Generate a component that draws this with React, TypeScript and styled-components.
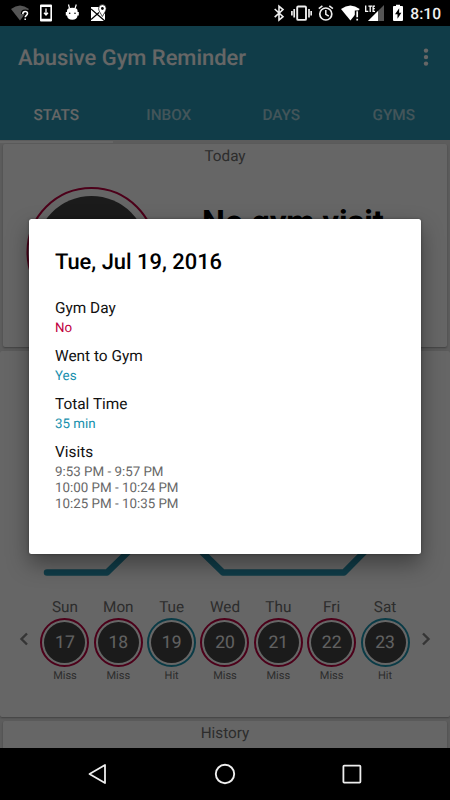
import React from "react";
import styled, { createGlobalStyle } from "styled-components";

const teal = "#2a97b3";
const ringTeal = "#1b93b0";
const crimson = "#bd0040";

const GlobalStyle = createGlobalStyle`
  * { box-sizing: border-box; }
  body {
    margin: 0;
    background: #000;
    font-family: Roboto, sans-serif;
    text-rendering: geometricPrecision;
  }
`;

const Screen = styled.div`
  position: relative;
  width: 450px;
  height: 800px;
  display: flex;
  flex-direction: column;
  overflow: hidden;
  background: #000;
`;

const StatusBar = styled.div`
  flex: none;
  height: 26px;
  display: flex;
  align-items: center;
  padding: 0 9px 0 10px;
`;

const StatusIcon = styled.svg<{ $gap?: number }>`
  flex: none;
  display: block;
  margin-left: ${(p) => p.$gap ?? 0}px;
`;

const Clock = styled.span`
  margin-left: auto;
  font-size: 15.6px;
  line-height: 26px;
  font-weight: 500;
  color: #f0f0f0;
  padding-top: 2px;
`;

const AppArea = styled.main`
  flex: none;
  height: 722px;
  overflow: hidden;
  background: #e6e6e6;
`;

const AppHeader = styled.header`
  height: 114px;
  background: ${teal};
  color: #fff;
`;

const TitleRow = styled.div`
  height: 63px;
  display: flex;
  align-items: center;
  justify-content: space-between;
  padding: 0 21px 0 18px;
`;

const AppTitle = styled.h1`
  margin: 2px 0 0;
  font-size: 21.9px;
  line-height: 28px;
  font-weight: 500;
`;

const Tabs = styled.nav`
  height: 51px;
  display: grid;
  grid-template-columns: repeat(4, 1fr);
`;

const Tab = styled.div<{ $active?: boolean }>`
  display: flex;
  justify-content: center;
  border-bottom: 2px solid ${(p) => (p.$active ? "#fff" : "transparent")};
  color: ${(p) => (p.$active ? "#fff" : "rgba(255,255,255,.6)")};
  font-size: 15.3px;
  line-height: 52px;
  font-weight: 500;
`;

const Cards = styled.div`
  display: flex;
  flex-direction: column;
  padding-top: 4px;
  gap: 4px;
`;

const Card = styled.section<{ $height: number; $inset: number }>`
  height: ${(p) => p.$height}px;
  margin: 0 ${(p) => p.$inset}px;
  display: flex;
  flex-direction: column;
  background: #fff;
  border-radius: 2px;
  box-shadow: 0 1px 2px rgba(0, 0, 0, 0.3);
`;

const CardTitle = styled.h2`
  margin: 0;
  text-align: center;
  font-size: 15.3px;
  line-height: 24px;
  font-weight: 400;
  color: #707070;
`;

const TodayBody = styled.div`
  display: flex;
  padding: 19px 0 0 23px;
`;

const TodayText = styled.strong`
  margin: 16px 0 0 46px;
  font-size: 32.5px;
  line-height: 38px;
  font-weight: 700;
  color: #000;
`;

const Chart = styled.svg`
  display: block;
  flex: none;
  margin-top: 180px;
`;

const Week = styled.div`
  display: flex;
  justify-content: center;
  align-items: flex-start;
  margin-top: 6px;
`;

const Days = styled.div`
  width: 373.4px;
  display: grid;
  grid-template-columns: repeat(7, 1fr);
`;

const DayColumn = styled.div`
  display: flex;
  flex-direction: column;
  align-items: center;
`;

const DayName = styled.span`
  font-size: 15.3px;
  line-height: 20px;
  color: #707070;
`;

const DayRing = styled.div<{ $hit: boolean }>`
  width: 49px;
  height: 49px;
  margin-top: 1px;
  border-radius: 50%;
  border: 2px solid ${(p) => (p.$hit ? ringTeal : crimson)};
  padding: 2px;
`;

const DayDisc = styled.div`
  height: 100%;
  border-radius: 50%;
  background: #444;
  color: #f2f2f2;
  font-size: 17.5px;
  line-height: 42px;
  text-align: center;
`;

const DayResult = styled.span`
  margin-top: 2px;
  font-size: 11px;
  line-height: 14px;
  color: #707070;
`;

const Arrow = styled.svg`
  flex: none;
  display: block;
  margin: 35px 9px 0;
`;

const Scrim = styled.div`
  position: absolute;
  inset: 26px 0 52px;
  background: rgba(0, 0, 0, 0.6);
  overflow: hidden;
`;

const Dialog = styled.div`
  position: absolute;
  left: 28.5px;
  top: 193px;
  width: 392px;
  height: 335px;
  padding: 30px 26.5px;
  background: #fff;
  border-radius: 2.5px;
  box-shadow: 0 10px 22px rgba(0, 0, 0, 0.38), 0 0 3px rgba(0, 0, 0, 0.35);
`;

const DialogTitle = styled.h2`
  margin: 0 0 21px;
  padding-top: 1px;
  font-size: 21.9px;
  line-height: 26px;
  font-weight: 500;
  color: #000;
`;

const Field = styled.div`
  margin-bottom: 8px;
`;

const FieldLabel = styled.div`
  font-size: 15.4px;
  line-height: 22px;
  padding-bottom: 2px;
  color: #111;
`;

const FieldValue = styled.div<{ $color?: string }>`
  font-size: 13.35px;
  line-height: 16px;
  color: ${(p) => p.$color ?? "#686868"};
`;

const NavBar = styled.footer`
  flex: none;
  height: 52px;
  display: flex;
  align-items: center;
  justify-content: center;
  gap: 103px;
`;

const week = [
  { name: "Sun", date: 17, hit: false },
  { name: "Mon", date: 18, hit: false },
  { name: "Tue", date: 19, hit: true },
  { name: "Wed", date: 20, hit: false },
  { name: "Thu", date: 21, hit: false },
  { name: "Fri", date: 22, hit: false },
  { name: "Sat", date: 23, hit: true },
];

const details = [
  { label: "Gym Day", values: ["No"], color: "#c0003f" },
  { label: "Went to Gym", values: ["Yes"], color: "#168fad" },
  { label: "Total Time", values: ["35 min"], color: "#168fad" },
  {
    label: "Visits",
    values: ["9:53 PM - 9:57 PM", "10:00 PM - 10:24 PM", "10:25 PM - 10:35 PM"],
  },
];

const Status = () => (
  <StatusBar>
    <StatusIcon width="20" height="26" viewBox="10 0 20 26">
      <path d="M11 9Q20 2 29 9L20 20.5Z" fill="#555" />
      <path d="M22.8 14Q22.8 11.6 25.2 11.6Q27.5 11.6 27.5 13.6C27.5 15.3 25.2 15.4 25.2 17.3M25.2 18.4V20" stroke="#000" strokeWidth="4" fill="none" />
      <path d="M22.8 14Q22.8 11.6 25.2 11.6Q27.5 11.6 27.5 13.6C27.5 15.3 25.2 15.4 25.2 17.3M25.2 18.4V20" stroke="#fff" strokeWidth="1.5" fill="none" />
    </StatusIcon>
    <StatusIcon $gap={10} width="12" height="26" viewBox="40 0 12 26">
      <path fillRule="evenodd" fill="#fff" d="M41 4.5H51Q52 4.5 52 5.5V20.5Q52 21.5 51 21.5H41Q40 21.5 40 20.5V5.5Q40 4.5 41 4.5ZM41.6 7V18.8H50.4V7Z" />
      <path d="M46 8.5V14M44 12.8L46 15L48 12.8" stroke="#fff" strokeWidth="1.3" fill="none" />
    </StatusIcon>
    <StatusIcon $gap={13} width="15" height="26" viewBox="65 0 15 26">
      <path d="M67 11Q67 7.8 72.3 7.8Q77.6 7.8 77.6 11V12H78.8V15.5H77.6Q77 19.8 72.3 19.8Q67.6 19.8 67 15.5H65.8V12H67Z" fill="#fff" />
      <path d="M69.5 8.5L68.5 4.5M75 8.5L76.3 4.5" stroke="#fff" strokeWidth="1.2" />
      <circle cx="69.7" cy="13.3" r=".8" />
      <circle cx="75" cy="13.3" r=".8" />
    </StatusIcon>
    <StatusIcon $gap={11} width="16" height="26" viewBox="91 0 16 26">
      <path d="M91 7H99L105 14V21H91Z" fill="#fff" />
      <path d="M91 9L105.5 21.5M91 19.5L99 12.5" stroke="#000" strokeWidth="1.3" />
      <path d="M102.4 16.5C100.5 13 98.6 11 98.6 8.4A3.8 3.8 0 0 1 106.2 8.4C106.2 11 104.3 13 102.4 16.5Z" fill="#fff" stroke="#000" strokeWidth=".7" />
      <circle cx="102.4" cy="8.5" r="1.4" />
    </StatusIcon>
    <StatusIcon $gap={167} width="11" height="26" viewBox="274 0 11 26">
      <path d="M274.7 9L283 16.7L279 20V6.3L283 9.6L274.7 17.2" stroke="#eee" strokeWidth="1.6" fill="none" />
    </StatusIcon>
    <StatusIcon $gap={6} width="21" height="26" viewBox="291 0 21 26">
      <rect x="297.2" y="6.5" width="8.8" height="13.4" rx="1" fill="none" stroke="#eee" strokeWidth="1.9" />
      <path d="M291.9 11V15.5M294.2 9V17.5M309 9V17.5M311.2 11V15.5" stroke="#eee" strokeWidth="1.7" />
    </StatusIcon>
    <StatusIcon $gap={6} width="16" height="26" viewBox="318 0 16 26">
      <circle cx="325.8" cy="14" r="6" fill="none" stroke="#eee" strokeWidth="1.7" />
      <path d="M325.8 10V14.3L328.8 16.2M318.8 8.7L322.4 5.8M332.9 8.7L329.3 5.8" stroke="#eee" strokeWidth="1.5" fill="none" />
    </StatusIcon>
    <StatusIcon $gap={7} width="19" height="26" viewBox="341 0 19 26">
      <path d="M341 9Q350.4 1.8 359.7 9L350.4 20.5Z" fill="#fff" />
      <path d="M354.8 10.5H361V22H354.8Z" />
      <path d="M357.2 11.2V17.3M357.2 18.7V20.5" stroke="#fff" strokeWidth="1.7" />
    </StatusIcon>
    <StatusIcon $gap={4} width="21" height="26" viewBox="364 0 21 26">
      <path d="M384 5V21H368Z" fill="#555" />
      <path d="M378 11V21H368Z" fill="#fff" />
      <path d="M364 5H375.5V13H364Z" />
      <path d="M365.7 5.5V11.4H368.3M368.4 6.1H372M370.2 6V12M375 6.1H373.1V11.4H375M373.1 8.7H374.8" stroke="#fff" strokeWidth="1.3" fill="none" />
    </StatusIcon>
    <StatusIcon $gap={8} width="10" height="26" viewBox="393 0 10 26">
      <path d="M396 6V4.8H400V6H402.2Q403 6 403 7V20Q403 21 402 21H394Q393 21 393 20V7Q393 6 393.8 6Z" fill="#fff" />
      <path d="M399.2 8.3L395 14.2H397.5V18.8L401.4 12.8H399.1Z" />
    </StatusIcon>
    <Clock>8:10</Clock>
  </StatusBar>
);

export default function App() {
  return (
    <>
      <GlobalStyle />
      <Screen>
        <Status />
        <AppArea>
          <AppHeader>
            <TitleRow>
              <AppTitle>Abusive Gym Reminder</AppTitle>
              <svg width="6" height="20" fill="#fff">
                <circle cx="3" cy="2.6" r="2.2" />
                <circle cx="3" cy="9.1" r="2.2" />
                <circle cx="3" cy="15.6" r="2.2" />
              </svg>
            </TitleRow>
            <Tabs>
              <Tab $active>STATS</Tab>
              <Tab>INBOX</Tab>
              <Tab>DAYS</Tab>
              <Tab>GYMS</Tab>
            </Tabs>
          </AppHeader>
          <Cards>
            <Card $height={203} $inset={3}>
              <CardTitle>Today</CardTitle>
              <TodayBody>
                <svg width="130" height="130">
                  <circle cx="65.5" cy="65" r="64" fill="none" stroke={crimson} strokeWidth="2" />
                  <circle cx="65.5" cy="65" r="56" fill="#444" />
                </svg>
                <TodayText>No gym visit</TodayText>
              </TodayBody>
            </Card>
            <Card $height={366} $inset={0}>
              <Chart width="450" height="60" viewBox="0 531 450 60">
                <path
                  d="M47 572.5H107L146.5 534H183.5L223 572.5H344L382 534"
                  fill="none"
                  stroke={teal}
                  strokeWidth="6.5"
                  strokeLinecap="round"
                  strokeLinejoin="round"
                />
              </Chart>
              <Week>
                <Arrow width="10" height="14" fill="none" stroke="#858585" strokeWidth="2.4">
                  <path d="M8 1.5L2.5 7L8 12.5" />
                </Arrow>
                <Days>
                  {week.map((day) => (
                    <DayColumn key={day.date}>
                      <DayName>{day.name}</DayName>
                      <DayRing $hit={day.hit}>
                        <DayDisc>{day.date}</DayDisc>
                      </DayRing>
                      <DayResult>{day.hit ? "Hit" : "Miss"}</DayResult>
                    </DayColumn>
                  ))}
                </Days>
                <Arrow width="10" height="14" fill="none" stroke="#858585" strokeWidth="2.4">
                  <path d="M2 1.5L7.5 7L2 12.5" />
                </Arrow>
              </Week>
            </Card>
            <Card $height={60} $inset={3}>
              <CardTitle>History</CardTitle>
            </Card>
          </Cards>
        </AppArea>
        <Scrim>
          <Dialog role="dialog">
            <DialogTitle>Tue, Jul 19, 2016</DialogTitle>
            {details.map((item) => (
              <Field key={item.label}>
                <FieldLabel>{item.label}</FieldLabel>
                {item.values.map((value) => (
                  <FieldValue key={value} $color={item.color}>
                    {value}
                  </FieldValue>
                ))}
              </Field>
            ))}
          </Dialog>
        </Scrim>
        <NavBar>
          <svg width="24" height="24" fill="none" stroke="#eee" strokeWidth="1.8">
            <path d="M19 3V21L3.5 12Z" strokeLinejoin="round" />
          </svg>
          <svg width="24" height="24" fill="none" stroke="#eee" strokeWidth="1.9">
            <circle cx="12" cy="12" r="9.2" />
          </svg>
          <svg width="24" height="24" fill="none" stroke="#eee" strokeWidth="1.8">
            <rect x="3.4" y="3.6" width="17" height="17" rx=".8" />
          </svg>
        </NavBar>
      </Screen>
    </>
  );
}
